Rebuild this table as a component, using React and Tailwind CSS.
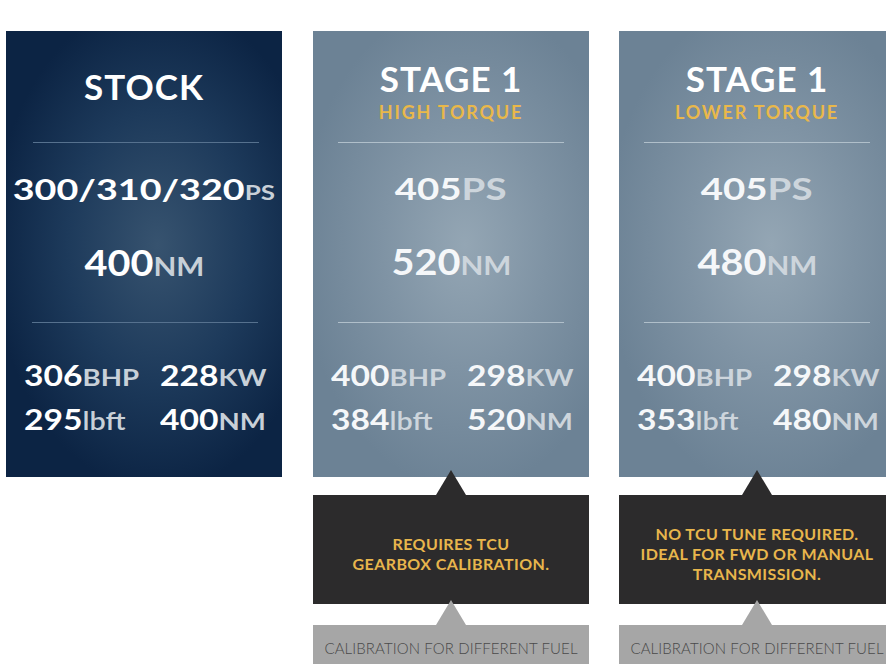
import React from "react";

function Tri({ color, top }) {
  return (
    <div
      className={`absolute left-1/2 -translate-x-1/2 w-[30px] h-[25px] [clip-path:polygon(50%_0,100%_100%,0_100%)] ${color} ${top}`}
    />
  );
}

function StockCard() {
  return (
    <div className="w-[276px] h-[446px] shrink-0 mr-[31px] flex flex-col bg-[radial-gradient(ellipse_60%_55%_at_55%_48%,#37536f_0%,#1d3a5b_55%,#0c2444_100%)]">
      <div className="h-[111px] pt-[38px] text-center">
        <span className="inline-block text-[35px] font-bold leading-none text-white tracking-[1px]">STOCK</span>
      </div>
      <div className="h-px w-[226px] ml-[27px] bg-[#56718e]" />
      <div className="h-[179px] flex flex-col items-center">
        <div className="mt-[31px] inline-block scale-x-[1.3] whitespace-nowrap font-bold leading-none text-white text-[29px]">
          300/310/320<span className="text-[20px] text-[#c8d0d8]">PS</span>
        </div>
        <div className="mt-[41px] inline-block scale-x-[1.1] whitespace-nowrap font-bold leading-none text-white text-[36px]">
          400<span className="text-[27px] text-[#c8d0d8]">NM</span>
        </div>
      </div>
      <div className="h-px w-[226px] ml-[26px] bg-[#56718e]" />
      <Stats unit="text-[#c8d0d8]" a="306" b="228" c="295" d="400" />
    </div>
  );
}

function Stats({ unit, a, b, c, d, num = "text-white" }) {
  const cell =
    "inline-block origin-left scale-x-[1.2] whitespace-nowrap font-bold leading-none text-[28px]";
  return (
    <div className="flex flex-col pt-[38px]">
      <div className="flex">
        <div className="w-[154px] pl-[18px]">
          <span className={`${cell} ${num}`}>
            {a}
            <span className={`text-[23px] ${unit}`}>BHP</span>
          </span>
        </div>
        <div>
          <span className={`${cell} ${num}`}>
            {b}
            <span className={`text-[23px] ${unit}`}>KW</span>
          </span>
        </div>
      </div>
      <div className="flex mt-[13px]">
        <div className="w-[154px] pl-[18px]">
          <span className={`${cell} ${num}`}>
            {c}
            <span className={`text-[24px] font-semibold ${unit}`}>lbft</span>
          </span>
        </div>
        <div>
          <span className={`${cell} ${num}`}>
            {d}
            <span className={`text-[23px] ${unit}`}>NM</span>
          </span>
        </div>
      </div>
    </div>
  );
}

function StageCol({ sub, nm, bhp, kw, lbft, nm2, note, last }) {
  return (
    <div className={`w-[276px] shrink-0 flex flex-col ${last ? "" : "mr-[30px]"}`}>
      <div className="h-[446px] flex flex-col bg-[radial-gradient(ellipse_60%_55%_at_55%_48%,#94a6b4_0%,#7f93a4_50%,#6c8295_100%)]">
        <div className="h-[111px] pt-[30px] flex flex-col items-center">
          <span className="inline-block text-[35px] font-bold leading-none text-white tracking-[1px]">STAGE 1</span>
          <span className="mt-[7px] inline-block text-[18px] font-bold leading-none text-[#e9b84a] tracking-[1.8px]">{sub}</span>
        </div>
        <div className="h-px w-[226px] ml-[25px] bg-[#b0bfca]" />
        <div className="h-[179px] flex flex-col items-center">
          <div className="mt-[30px] inline-block scale-x-[1.28] whitespace-nowrap font-bold leading-none text-[#f5f7f9] text-[30px]">
            405<span className="text-[#cdd5dc]">PS</span>
          </div>
          <div className="mt-[40px] inline-block scale-x-[1.1] whitespace-nowrap font-bold leading-none text-[#f5f7f9] text-[36px]">
            {nm}<span className="text-[27px] text-[#cdd5dc]">NM</span>
          </div>
        </div>
        <div className="h-px w-[226px] ml-[25px] bg-[#b0bfca]" />
        <Stats unit="text-[#cdd5dc]" num="text-[#f5f7f9]" a={bhp} b={kw} c={lbft} d={nm2} />
      </div>
      <div className="relative mt-[18px] h-[109px] bg-[#2c2b2c] flex items-center justify-center pt-[8px]">
        <Tri color="bg-[#2c2b2c]" top="-top-[25px]" />
        <div className="text-center text-[16px] font-bold leading-[20px] tracking-[0.4px] text-[#e8b64c]">
          {note}
        </div>
      </div>
      <div className="relative mt-[21px] h-[60px] bg-[#a6a6a6] pt-[11px] text-center">
        <Tri color="bg-[#a6a6a6]" top="-top-[25px]" />
        <span className="inline-block text-[15px] font-light leading-none tracking-[0.1px] text-[#4a4a4a] whitespace-nowrap">
          CALIBRATION FOR DIFFERENT FUEL
        </span>
      </div>
    </div>
  );
}

export default function App() {
  return (
    <div className="w-[886px] h-[664px] overflow-hidden bg-white [font-family:Lato,'Noto_Sans',sans-serif]">
      <div className="flex items-start pt-[31px] pl-[6px] w-[1000px]">
        <StockCard />
        <StageCol
          sub="HIGH TORQUE"
          nm="520"
          bhp="400"
          kw="298"
          lbft="384"
          nm2="520"
          note={
            <>
              REQUIRES TCU
              <br />
              GEARBOX CALIBRATION.
            </>
          }
        />
        <StageCol
          last
          sub="LOWER TORQUE"
          nm="480"
          bhp="400"
          kw="298"
          lbft="353"
          nm2="480"
          note={
            <>
              NO TCU TUNE REQUIRED.
              <br />
              IDEAL FOR FWD OR MANUAL
              <br />
              TRANSMISSION.
            </>
          }
        />
      </div>
    </div>
  );
}
